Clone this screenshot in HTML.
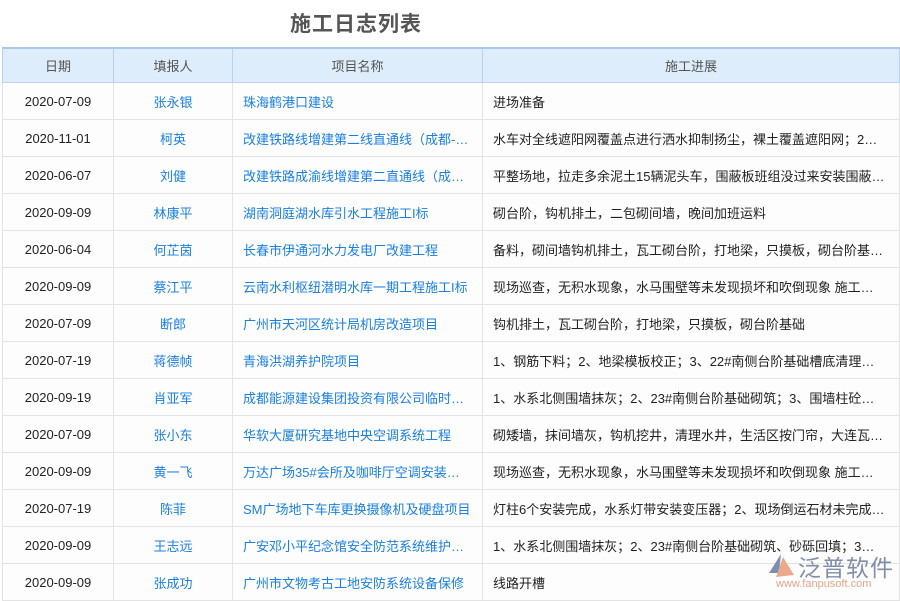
<!DOCTYPE html>
<html><head><meta charset="utf-8"><style>
body{margin:0;width:900px;height:600px;overflow:hidden;background:#fff;font-family:"Liberation Sans","Noto Sans CJK SC",sans-serif;position:relative}
h1{position:absolute;left:0;top:8px;width:712px;text-align:center;margin:0;font-size:21px;color:#555;font-weight:bold;letter-spacing:1px}
table{position:absolute;left:2px;top:47px;border-collapse:collapse;table-layout:fixed;width:898px;font-size:13px}
td,th{border:1px solid #e3e3e3;height:36px;padding:0 10px;white-space:nowrap;overflow:hidden;text-overflow:ellipsis;color:#222}
th{background:#deedfb;font-weight:normal;color:#555;border-color:#b9d3ec;border-top:2px solid #a9c9e8;height:33px}
td{background:#fdfdfe}
td:nth-child(1),td:nth-child(2){text-align:center}
td:nth-child(2),td:nth-child(3){color:#1a7fe0}
.logo{position:absolute;left:766px;top:551px;}
</style></head><body>
<h1>施工日志列表</h1>
<table>
<colgroup><col style="width:111px"><col style="width:119px"><col style="width:250px"><col></colgroup>
<tr><th>日期</th><th>填报人</th><th>项目名称</th><th>施工进展</th></tr>
<tr><td>2020-07-09</td><td>张永银</td><td>珠海鹤港口建设</td><td>进场准备</td></tr>
<tr><td>2020-11-01</td><td>柯英</td><td>改建铁路线增建第二线直通线（成都-西安）…</td><td>水车对全线遮阳网覆盖点进行洒水抑制扬尘，裸土覆盖遮阳网；2…</td></tr>
<tr><td>2020-06-07</td><td>刘健</td><td>改建铁路成渝线增建第二直通线（成都-重庆）</td><td>平整场地，拉走多余泥土15辆泥头车，围蔽板班组没过来安装围蔽板…</td></tr>
<tr><td>2020-09-09</td><td>林康平</td><td>湖南洞庭湖水库引水工程施工I标</td><td>砌台阶，钩机排土，二包砌间墙，晚间加班运料</td></tr>
<tr><td>2020-06-04</td><td>何芷茵</td><td>长春市伊通河水力发电厂改建工程</td><td>备料，砌间墙钩机排土，瓦工砌台阶，打地梁，只摸板，砌台阶基…</td></tr>
<tr><td>2020-09-09</td><td>蔡江平</td><td>云南水利枢纽潜明水库一期工程施工I标</td><td>现场巡查，无积水现象，水马围壁等未发现损坏和吹倒现象 施工…</td></tr>
<tr><td>2020-07-09</td><td>断郎</td><td>广州市天河区统计局机房改造项目</td><td>钩机排土，瓦工砌台阶，打地梁，只摸板，砌台阶基础</td></tr>
<tr><td>2020-07-19</td><td>蒋德帧</td><td>青海洪湖养护院项目</td><td>1、钢筋下料；2、地梁模板校正；3、22#南侧台阶基础槽底清理…</td></tr>
<tr><td>2020-09-19</td><td>肖亚军</td><td>成都能源建设集团投资有限公司临时办公室…</td><td>1、水系北侧围墙抹灰；2、23#南侧台阶基础砌筑；3、围墙柱砼…</td></tr>
<tr><td>2020-07-09</td><td>张小东</td><td>华软大厦研究基地中央空调系统工程</td><td>砌矮墙，抹间墙灰，钩机挖井，清理水井，生活区按门帘，大连瓦…</td></tr>
<tr><td>2020-09-09</td><td>黄一飞</td><td>万达广场35#会所及咖啡厅空调安装工程</td><td>现场巡查，无积水现象，水马围壁等未发现损坏和吹倒现象 施工…</td></tr>
<tr><td>2020-07-19</td><td>陈菲</td><td>SM广场地下车库更换摄像机及硬盘项目</td><td>灯柱6个安装完成，水系灯带安装变压器；2、现场倒运石材未完成…</td></tr>
<tr><td>2020-09-09</td><td>王志远</td><td>广安邓小平纪念馆安全防范系统维护工程</td><td>1、水系北侧围墙抹灰；2、23#南侧台阶基础砌筑、砂砾回填；3…</td></tr>
<tr><td>2020-09-09</td><td>张成功</td><td>广州市文物考古工地安防系统设备保修</td><td>线路开槽</td></tr>
</table>
<div class="logo">
<svg width="30" height="28" style="position:absolute;left:0;top:2px" viewBox="0 0 30 28"><path d="M15 1 L3 20 L13 20 Z" fill="#7d8fb0"/><path d="M17 4 L28 22 L10 24 Z" fill="#e9a98a"/></svg>
<div style="position:absolute;left:32px;top:-2px;font-size:23px;color:#7f8fa9;white-space:nowrap;letter-spacing:1px">泛普软件</div>
<div style="position:absolute;left:10px;top:27px;font-size:11px;color:#e8a58a;white-space:nowrap">www.fanpusoft.com</div>
</div>
</body></html>
